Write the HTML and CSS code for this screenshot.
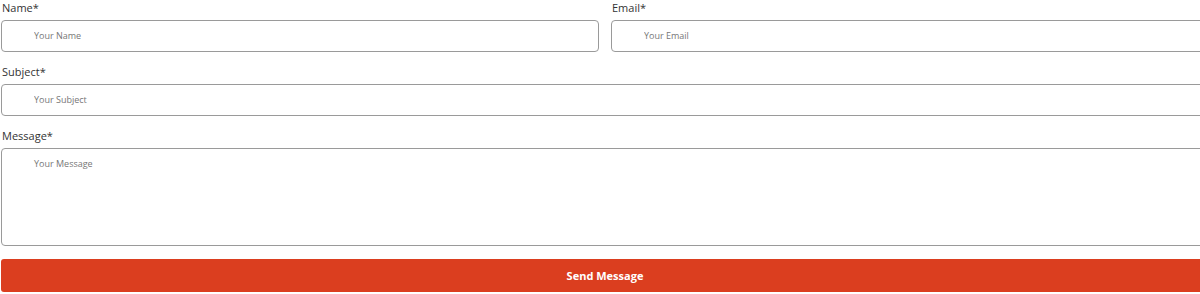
FILE: index.html
```html
<!DOCTYPE html>
<html lang="en">
<head>
  <meta charset="UTF-8">
  <meta name="viewport" content="width=device-width, initial-scale=1.0">
  <title>Contact</title>
  <link rel="stylesheet" href="styles.css">
</head>
<body>
  <form class="contact-form">
    <div class="row">
      <div class="field">
        <label for="name">Name*</label>
        <input id="name" type="text" placeholder="Your Name">
      </div>
      <div class="field">
        <label for="email">Email*</label>
        <input id="email" type="email" placeholder="Your Email">
      </div>
    </div>
    <div class="field">
      <label for="subject">Subject*</label>
      <input id="subject" type="text" placeholder="Your Subject">
    </div>
    <div class="field">
      <label for="message">Message*</label>
      <textarea id="message" placeholder="Your Message"></textarea>
    </div>
    <button type="button" class="btn">Send Message</button>
  </form>
</body>
</html>
```

FILE: styles.css
```css
html, body {
  overflow: hidden;
}
body {
  margin: 0;
  font-family: 'Open Sans', 'Noto Sans', sans-serif;
  color: #333;
  background: #fff;
}
.contact-form {
  width: 1208px;
  margin-left: 1px;
  display: flex;
  flex-direction: column;
  gap: 12px;
}
.row {
  display: grid;
  grid-template-columns: 1fr 1fr;
  gap: 12px;
}
.field {
  display: flex;
  flex-direction: column;
}
.field label {
  font-size: 11px;
  line-height: 15px;
  height: 20px;
  padding-left: 1px;
}
input, textarea {
  box-sizing: border-box;
  width: 100%;
  height: 32px;
  border: 1px solid #9a9a9a;
  border-radius: 4px;
  padding: 0 0 0 32px;
  font-family: 'Open Sans', 'Noto Sans', sans-serif;
  font-size: 9px;
  color: #333;
  background: #fff;
  margin: 0;
}
input {
  padding-bottom: 1px;
}
textarea {
  height: 98px;
  padding-top: 8px;
  resize: none;
}
::placeholder {
  color: #777;
}
.btn {
  margin-top: 1px;
  height: 33px;
  width: 100%;
  border: none;
  border-radius: 3px;
  background: #db3e1f;
  color: #fff;
  font-family: 'Open Sans', sans-serif;
  font-weight: 700;
  font-size: 11px;
  cursor: pointer;
}
```
